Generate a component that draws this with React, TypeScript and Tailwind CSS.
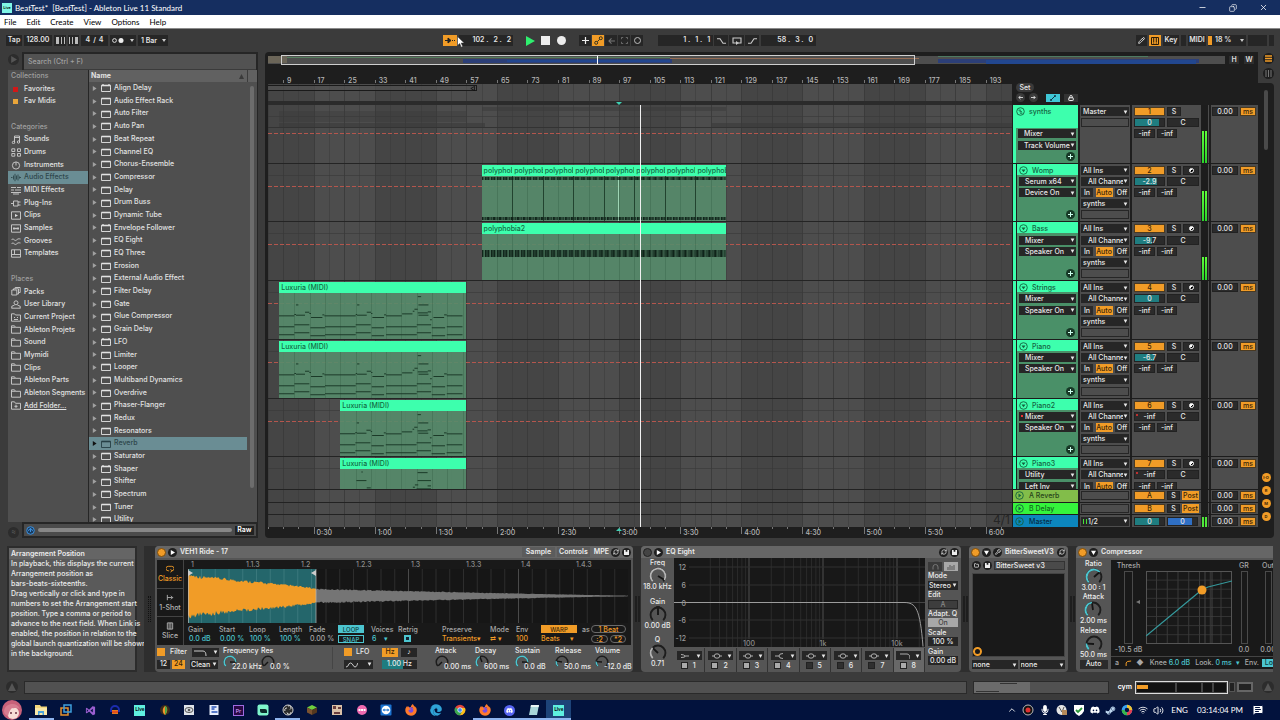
import React from "react";
import { FaDiscord, FaFirefoxBrowser, FaEdge, FaSteamSymbol, FaMicrophone } from "react-icons/fa";
import { DiVisualstudio } from "react-icons/di";
import {
  Wifi, Volume2, ChevronUp, Minus, Copy, X, Pencil, Lock, Wrench, RefreshCw, MessageSquareText, Folder,
} from "lucide-react";

const FIRST_BAR = 5.07;
const BAR_SPAN = 194.8;
const pct = (bar: number) => `${((bar - FIRST_BAR) / BAR_SPAN) * 100}%`;
const span = (bars: number) => `${(bars / BAR_SPAN) * 100}%`;
const range = (n: number) => Array.from({ length: n }, (_, i) => i);

/* ---------- shared controls ---------- */

function Drop({ label, value, className = "", text = "pl-[2px]" }: { label: string; value: string; className?: string; text?: string }) {
  return (
    <div className={`relative h-[9px] shrink-0 overflow-hidden bg-[#262626] ${className}`}>
      <select aria-label={label} className={`block h-full w-full appearance-none overflow-hidden bg-transparent leading-[9px] text-[#e8e8e8] outline-none ${text}`}>
        <option>{value}</option>
      </select>
      <span className="pointer-events-none absolute inset-y-0 right-0 flex w-[6px] items-center bg-[#262626]">
        <svg viewBox="0 0 5 5" className="h-[4px] w-[5px]"><path d="M.2.5h4.600L2.500 5z" fill="#e8e8e8" /></svg>
      </span>
    </div>
  );
}

function Btn({ children, className = "", label }: { children?: React.ReactNode; className?: string; label?: string }) {
  return (
    <button type="button" aria-label={label} className={`flex shrink-0 items-center justify-center overflow-hidden whitespace-nowrap ${className}`}>
      {children}
    </button>
  );
}

function Knob({ value, size = 14, color = "#4cc5cf", centre = false }: { value: number; size?: number; color?: string; centre?: boolean }) {
  const pt = (v: number, r: number) => {
    const a = ((135 + 270 * v) * Math.PI) / 180;
    return [8 + r * Math.cos(a), 8 + r * Math.sin(a)];
  };
  const arc = (from: number, to: number) => {
    const [x1, y1] = pt(from, 6.6);
    const [x2, y2] = pt(to, 6.6);
    return `M${x1} ${y1}A6.6 6.6 0 ${(to - from) * 270 > 180 ? 1 : 0} 1 ${x2} ${y2}`;
  };
  const [nx, ny] = pt(value, 6);
  return (
    <svg viewBox="0 0 16 16" width={size} height={size} fill="none" className="shrink-0">
      <path d={arc(0, 1)} stroke="#1d1d1d" strokeWidth="1.7" />
      {!centre && value > 0 && <path d={arc(0, value)} stroke={color} strokeWidth="1.7" />}
      {centre && <path d="M6 0h4L8 2.500z" fill="#1d1d1d" />}
      <path d={`M8 8L${nx} ${ny}`} stroke="#151515" strokeWidth="1.6" />
    </svg>
  );
}

function RoundIcon({ children, className = "bg-[#1f1f1f] text-[#ddd]", label }: { children?: React.ReactNode; className?: string; label: string }) {
  return (
    <button type="button" aria-label={label} className={`flex h-[9px] w-[9px] shrink-0 items-center justify-center rounded-full ${className}`}>
      {children}
    </button>
  );
}

const SaveGlyph = () => (
  <svg viewBox="0 0 6 6" className="h-[5px] w-[5px]"><path d="M0 0h6v6H0z" fill="#eee" /><path d="M2 0h2v2H2z" fill="#222" /></svg>
);
const PlayGlyph = () => (
  <svg viewBox="0 0 6 6" className="h-[5px] w-[5px]"><path d="M1 0l5 3-5 3z" fill="#fff" /></svg>
);
const DownGlyph = () => (
  <svg viewBox="0 0 6 6" className="h-[5px] w-[5px]"><path d="M0 1h6L3 6z" fill="#fff" /></svg>
);

/* ---------- window chrome ---------- */

function TitleBar() {
  return (
    <header className="flex h-[15px] items-center bg-[#152e60] px-[2px] text-[8px] text-white [font-family:Lato,sans-serif]">
      <span className="mr-[3px] flex h-[10px] w-[10px] items-center justify-center bg-[#7ff5e6] text-[4px] font-bold text-black">Live</span>
      <h1 className="flex-1 whitespace-pre">BeatTest*  [BeatTest] - Ableton Live 11 Standard</h1>
      <div className="flex gap-[22px] pr-[10px]">
        <button aria-label="Minimize"><Minus size={9} /></button>
        <button aria-label="Restore"><Copy size={8} className="-scale-x-100" /></button>
        <button aria-label="Close"><X size={9} /></button>
      </div>
    </header>
  );
}

function MenuBar() {
  return (
    <nav className="flex h-[13px] items-center gap-[10px] bg-white px-[4px] text-[8px] text-black [font-family:Lato,sans-serif]">
      {["File", "Edit", "Create", "View", "Options", "Help"].map((m) => (
        <button key={m}>{m}</button>
      ))}
    </nav>
  );
}

function Toolbar() {
  const box = "h-[11px] bg-[#262626]";
  return (
    <div className="flex h-[24px] items-center border-t border-[#8a8a8a] px-[6px] text-[7px] font-semibold text-[#e4e4e4]">
      <div className="flex shrink-0 gap-[2px]">
        <Btn className={`${box} w-[16px]`}>Tap</Btn>
        <Btn className={`${box} w-[28px]`}>128.00</Btn>
        <Btn className={`${box} w-[12px]`} label="Nudge down">
          <svg viewBox="0 0 9 7" className="h-[7px] w-[9px]"><path d="M0 0h3v7H0zM5 0h1v7H5zM8 0h1v7H8z" fill="#bbb" /></svg>
        </Btn>
        <Btn className={`${box} w-[11px]`} label="Nudge up">
          <svg viewBox="0 0 9 7" className="h-[7px] w-[9px]"><path d="M0 0h1v7H0zM3 0h1v7H3zM6 0h3v7H6z" fill="#bbb" /></svg>
        </Btn>
        <Btn className={`${box} w-[27px] gap-[3px]`}><span>4</span><span>/</span><span>4</span></Btn>
        <Btn className={`${box} w-[26px] gap-[6px]`} label="Metronome">
          <svg viewBox="0 0 12 5" className="h-[5px] w-[12px]"><circle cx="2.5" cy="2.5" r="1.9" fill="none" stroke="#ddd" /><circle cx="9" cy="2.5" r="2.5" fill="#eee" /></svg>
          <svg viewBox="0 0 4 3" className="h-[3px] w-[4px]"><path d="M0 0h4L2 3z" fill="#ccc" /></svg>
        </Btn>
        <div className={`${box} relative w-[30px]`}>
          <select aria-label="Quantization" className="h-full w-full appearance-none bg-transparent pl-[3px] leading-[11px] outline-none"><option>1 Bar</option></select>
          <svg viewBox="0 0 4 3" className="pointer-events-none absolute right-[2px] top-[4px] h-[3px] w-[4px]"><path d="M0 0h4L2 3z" fill="#ccc" /></svg>
        </div>
      </div>
      <div className="flex-[278]" />
      <div className="flex shrink-0 items-center">
        <Btn className="relative h-[11px] w-[14px] bg-[#f19c27]" label="Follow">
          <svg viewBox="0 0 12 7" className="h-[7px] w-[12px]"><path d="M1 3.5h4M4 1l3 2.5L4 6z" fill="#222" stroke="#222" /><path d="M8 3.5h1M10 3.5h1" stroke="#222" /></svg>
        </Btn>
        <div className={`${box} relative ml-[2px] flex w-[54px] items-center justify-end gap-[5px] pr-[2px]`}>
          <span>102 .</span><span>2 .</span><span>2</span>
          <svg viewBox="0 0 8 12" className="absolute left-[-2px] top-[1px] h-[12px] w-[8px]"><path d="M.5.5v9l2.2-2 1.5 3.7 1.5-.6L4.2 7h3z" fill="#fff" stroke="#333" strokeWidth=".5" /></svg>
        </div>
        <button aria-label="Play" className="ml-[12px]"><svg viewBox="0 0 10 10" className="h-[10px] w-[10px]"><path d="M1 0l9 5-9 5z" fill="#2ff06f" /></svg></button>
        <button aria-label="Stop" className="ml-[6px] h-[9px] w-[9px] bg-[#ededed]" />
        <button aria-label="Record" className="ml-[7px] h-[9px] w-[9px] rounded-full bg-[#ededed]" />
        <div className="ml-[13px] flex gap-[1px]">
          <Btn className={`${box} w-[12px]`} label="Overdub"><svg viewBox="0 0 7 7" className="h-[7px] w-[7px]"><path d="M3.5 0v7M0 3.5h7" stroke="#eee" strokeWidth="1.2" /></svg></Btn>
          <Btn className="h-[11px] w-[12px] bg-[#f19c27]" label="Automation arm"><svg viewBox="0 0 9 9" className="h-[9px] w-[9px]" fill="none" stroke="#332" strokeWidth="1"><circle cx="2.2" cy="6.8" r="1.5" /><circle cx="6.8" cy="2.2" r="1.5" /><path d="M3.3 5.7l2.4-2.4" /></svg></Btn>
          <Btn className={`${box} w-[12px]`} label="Re-enable automation"><svg viewBox="0 0 8 7" className="h-[6px] w-[7px]"><path d="M8 3.5H1M4 .5l-3 3 3 3" fill="none" stroke="#777" strokeWidth="1.2" /></svg></Btn>
          <Btn className={`${box} w-[12px]`} label="Capture"><svg viewBox="0 0 8 8" className="h-[7px] w-[7px]"><path d="M0.500 2.500V.5h2M5.500 .5h2v2M7.500 5.500v2h-2M2.500 7.500H.5V5.500" fill="none" stroke="#777" /></svg></Btn>
          <Btn className={`${box} w-[12px]`} label="Session record"><span className="h-[7px] w-[7px] rounded-full border border-[#bbb]" /></Btn>
        </div>
        <div className={`${box} ml-[15px] flex w-[55px] items-center justify-end gap-[5px] pr-[3px]`}><span>1 .</span><span>1 .</span><span>1</span></div>
        <div className="ml-[1px] flex gap-[1px]">
          <Btn className={`${box} w-[14px]`} label="Punch in"><svg viewBox="0 0 9 6" className="h-[6px] w-[9px]"><path d="M0 .7h3l3 4.600h3" fill="none" stroke="#ccc" strokeWidth="1.1" /></svg></Btn>
          <Btn className={`${box} w-[15px]`} label="Loop"><svg viewBox="0 0 10 8" className="h-[8px] w-[10px]"><path d="M4 6H1V1h8v5H6" fill="none" stroke="#ccc" strokeWidth="1.1" /><path d="M4 4l3 2-3 2z" fill="#ccc" /></svg></Btn>
          <Btn className={`${box} w-[14px]`} label="Punch out"><svg viewBox="0 0 9 6" className="h-[6px] w-[9px]"><path d="M0 5.300h3L6 .7h3" fill="none" stroke="#ccc" strokeWidth="1.1" /></svg></Btn>
        </div>
        <div className={`${box} ml-[2px] flex w-[55px] items-center justify-end gap-[5px] pr-[3px]`}><span>58 .</span><span>3 .</span><span>0</span></div>
      </div>
      <div className="flex-[323]" />
      <div className="flex shrink-0 gap-[2px]">
        <Btn className={`${box} w-[11px]`} label="Draw mode"><Pencil size={7} strokeWidth={3} /></Btn>
        <Btn className="h-[11px] w-[12px] bg-[#f19c27]" label="MIDI keyboard"><svg viewBox="0 0 8 8" className="h-[8px] w-[8px]"><path d="M.5.5h7v7h-7z" fill="none" stroke="#2a1c08" /><path d="M2.200 0v5h1V0zM4.800 0v5h1V0z" fill="#2a1c08" /><path d="M2.700 5v3M5.300 5v3" stroke="#2a1c08" strokeWidth=".6" /></svg></Btn>
        <Btn className={`${box} w-[16px]`}>Key</Btn>
        <span className={`${box} w-[5px]`} />
        <Btn className={`${box} w-[18px]`}>MIDI</Btn>
        <div className={`${box} flex w-[38px] items-center`}>
          <span className="mr-[3px] h-[9px] w-[4px] bg-[#f19c27]" /><span className="flex-1">18 %</span>
          <svg viewBox="0 0 4 3" className="mr-[2px] h-[3px] w-[4px]"><path d="M0 0h4L2 3z" fill="#ccc" /></svg>
        </div>
        <span className={`${box} w-[19px]`} />
        <span className={`${box} w-[5px]`} />
      </div>
    </div>
  );
}

/* ---------- browser ---------- */

type IconName = "sq" | "music" | "drums" | "knob" | "fx" | "midi" | "plug" | "clip" | "sample" | "groove" | "template" | "packs" | "user" | "project" | "folder" | "add";

function SideIcon({ name }: { name: IconName }) {
  const d: Record<string, React.ReactNode> = {
    music: <><path d="M3.500 7.500V1h5v6M3.500 2.500h5" /><circle cx="2.500" cy="7.500" r="1.200" /><circle cx="7.500" cy="7" r="1.200" /></>,
    drums: <path d="M.8.8h3v2.700h-3zM6.500.8h3v2.700h-3zM.8 5.500h3v2.700h-3zM6.500 5.500h3v2.700h-3z" />,
    knob: <><circle cx="5" cy="4.500" r="3.600" /><path d="M5 1v3.500" /></>,
    fx: <path d="M0 4.500h1.500M2.500 2.500v4M4 .8v7.400M5.500 2.500v4M7 1.500v6M8.500 3.500v2M9 4.500h1.500" stroke="#2e464b" />,
    midi: <path d="M0 1.500h5M6 1.500h4M0 4h3M4 4h6M0 6.500h10M2 8h6" />,
    plug: <path d="M0 4.500h2M2.500 2h4.500v5H2.500zM7 3h2.500M7 6h2.500" />,
    clip: <><path d="M.5.8h9v7.400h-9z" /><path d="M4 3l3 1.500L4 6z" fill="#ddd" stroke="none" /></>,
    sample: <path d="M.5.8h9v7.400h-9zM2 4.500h6M3 3v3M5 3.500v2M7 3v3" />,
    groove: <path d="M.5 3c2-3 3 2 5 0s3-1 4-1M.5 7c2-3 3 2 5 0s3-1 4-1" />,
    template: <path d="M.5.8h9v7.400h-9zM3.500.8v4.500M.5 5.500h9" />,
    packs: <path d="M.8 3h5v5h-5zM2.500 3V1.800h5V7H6M4.200 1.500V.5h5v5H8" />,
    user: <><circle cx="5" cy="2.800" r="2" /><path d="M.8 8.200v-2l2.700-1M9.200 8.200v-2l-2.700-1M.5 8.200h9" /></>,
    project: <path d="M.5 8.200V.8h3l1 1.200h5v6.200zM3 4.500h1M6 4.500h1M3 6.500h4" />,
    folder: <path d="M.5 8.200V.8h3l1 1.500h5v5.900zM.5 2.300h4" />,
    add: <path d="M.5 8.200V.8h3l1 1.500h5v5.900zM5 3.700v3.200M3.400 5.300h3.200" />,
  };
  return <svg viewBox="0 0 10 9" className="h-[9px] w-[10px] shrink-0" fill="none" stroke="#cfcfcf" strokeWidth=".9">{d[name]}</svg>;
}

type SideRow = { head?: string; text?: string; icon?: IconName; color?: string };
const SIDE: SideRow[] = [
  { head: "Collections" },
  { text: "Favorites", icon: "sq", color: "#d01818" },
  { text: "Fav Midis", icon: "sq", color: "#e9a53a" },
  {},
  { head: "Categories" },
  { text: "Sounds", icon: "music" },
  { text: "Drums", icon: "drums" },
  { text: "Instruments", icon: "knob" },
  { text: "Audio Effects", icon: "fx" },
  { text: "MIDI Effects", icon: "midi" },
  { text: "Plug-Ins", icon: "plug" },
  { text: "Clips", icon: "clip" },
  { text: "Samples", icon: "sample" },
  { text: "Grooves", icon: "groove" },
  { text: "Templates", icon: "template" },
  {},
  { head: "Places" },
  { text: "Packs", icon: "packs" },
  { text: "User Library", icon: "user" },
  { text: "Current Project", icon: "project" },
  { text: "Ableton Projets", icon: "folder" },
  { text: "Sound", icon: "folder" },
  { text: "Mymidi", icon: "folder" },
  { text: "Clips", icon: "folder" },
  { text: "Ableton Parts", icon: "folder" },
  { text: "Ableton Segments", icon: "folder" },
  { text: "Add Folder...", icon: "add" },
];

const EFFECTS = [
  "Align Delay", "Audio Effect Rack", "Auto Filter", "Auto Pan", "Beat Repeat", "Channel EQ", "Chorus-Ensemble", "Compressor",
  "Delay", "Drum Buss", "Dynamic Tube", "Envelope Follower", "EQ Eight", "EQ Three", "Erosion", "External Audio Effect",
  "Filter Delay", "Gate", "Glue Compressor", "Grain Delay", "LFO", "Limiter", "Looper", "Multiband Dynamics", "Overdrive",
  "Phaser-Flanger", "Redux", "Resonators", "Reverb", "Saturator", "Shaper", "Shifter", "Spectrum", "Tuner", "Utility",
];
const MAX_DEVICES = ["Align Delay", "Envelope Follower", "LFO", "Shaper"];

function Browser() {
  return (
    <aside className="flex w-[250px] shrink-0 flex-col text-[7px] font-medium text-[#e2e2e2]">
      <div className="flex h-[18px] items-center">
        <Btn label="Preview" className="mb-[3px] h-[11px] w-[11px] rounded-full bg-[#2c2c2c]"><svg viewBox="0 0 6 6" className="h-[7px] w-[7px]"><path d="M1 0l5 3-5 3z" fill="#555" /></svg></Btn>
        <div className="ml-[3px] flex-1 self-stretch border-2 border-b-0 border-[#262626]">
          <input aria-label="Search" placeholder="Search (Ctrl + F)" className="block h-[15px] w-full bg-[#525252] pl-[4px] text-[7px] outline-none placeholder:text-[#a0a0a0]" />
        </div>
      </div>
      <div className="flex h-[452px] border-r border-[#262626] bg-[#4f4f4f]">
        <nav className="w-[80px] shrink-0 overflow-hidden">
          <div className="flex h-[342px] flex-col">
            {SIDE.map((r, i) => (
              <div key={i} className={`flex flex-1 items-center pl-[3px] ${r.text === "Audio Effects" ? "bg-[#6a8d94] text-[#2e464b]" : ""}`}>
                {r.head && <h2 className="text-[#9f9f9f]">{r.head}</h2>}
                {r.text && (
                  <a href="#" className="flex items-center gap-[3px] whitespace-nowrap">
                    {r.icon === "sq" ? (
                      <span className="ml-[2px] mr-[3px] h-[5px] w-[5px]" style={{ background: r.color }} />
                    ) : (
                      <SideIcon name={r.icon!} />
                    )}
                    <span className={r.icon === "add" ? "underline" : ""}>{r.text}</span>
                  </a>
                )}
              </div>
            ))}
          </div>
        </nav>
        <div className="relative flex min-w-0 flex-1 flex-col border-l border-[#262626]">
          <div className="flex h-[12px] shrink-0 items-center bg-[#616161] pl-[2px] font-bold">
            <span className="flex-1">Name</span>
            <svg viewBox="0 0 5 5" className="h-[5px] w-[5px]"><path d="M0 5h5L2.500 0z" fill="#3a3a3a" /></svg>
            <span className="ml-[3px] mr-[9px] h-full w-px bg-[#3c3c3c]" />
          </div>
          <div className="flex min-h-0 flex-1 overflow-hidden">
            <ul className="flex h-[444px] flex-1 flex-col">
              {EFFECTS.map((e) => {
                const on = e === "Reverb";
                const c = on ? "#263f45" : "#e2e2e2";
                return (
                  <li key={e} className={`flex flex-1 items-center pl-[3px] ${on ? "bg-[#6a8d94] text-[#2e464b]" : ""}`}>
                    <svg viewBox="0 0 5 6" className="mr-[4px] h-[5px] w-[5px]"><path d="M.5 0L5 3 .5 6z" fill={on ? "#111" : "#a0a0a0"} /></svg>
                    <svg viewBox="0 0 10 8" className="mr-[3px] h-[8px] w-[10px]" fill="none" stroke={c}>
                      <path d="M.5 1.500h9v6h-9z" strokeWidth=".9" /><path d="M.5 1.500h9" strokeWidth="1.600" />
                      {MAX_DEVICES.includes(e) && <path d="M2 0v1M8 0v1M2 7v1M8 7v1M0 4.500h1M9 4.500h1" strokeWidth="1.200" />}
                    </svg>
                    <span>{e}</span>
                  </li>
                );
              })}
            </ul>
            <div className="w-[10px] pl-[3px] pt-[4px]"><div className="h-[402px] w-[4px] rounded-full bg-[#6d6d6d]" /></div>
          </div>
        </div>
      </div>
      <div className="flex h-[16px] items-center">
        <Btn label="Groove pool" className="mt-[5px] h-[11px] w-[11px] rounded-full bg-[#2c2c2c] text-[#555]">≈</Btn>
        <div className="ml-[3px] flex flex-1 items-center gap-[3px] self-stretch border-2 border-[#262626] bg-[#4b4b4b] px-[2px]">
          <svg viewBox="0 0 9 9" className="h-[9px] w-[9px] shrink-0"><circle cx="4.500" cy="4.500" r="3.800" fill="#1a3b5e" stroke="#3b8fdc" /><path d="M2.500 5a2 2 0 014 0M4.500 2v4" stroke="#3b8fdc" fill="none" /></svg>
          <div className="h-[4px] flex-1 rounded-sm bg-[#878787]" />
          <Btn className="h-[9px] w-[19px] bg-[#222] font-semibold text-white">Raw</Btn>
        </div>
      </div>
    </aside>
  );
}

/* ---------- arrangement ---------- */

type Note = [number, number, number];
const NOTES: Note[] = [
  [42, 88, 136], [88, 93, 132], [93, 120, 134], [120, 133, 125], [133, 138, 129], [138, 172, 141], [172, 178, 133], [178, 272, 136],
  [272, 276, 132], [276, 305, 134], [305, 318, 125], [318, 322, 129], [322, 357, 141], [357, 363, 133], [363, 410, 136],
  [411, 442, 130], [443, 448, 122], [448, 458, 116], [458, 488, 127], [460, 490, 134], [488, 498, 124], [495, 500, 148], [505, 537, 141],
  [537, 545, 133], [545, 592, 136], [42, 88, 169], [88, 133, 163], [136, 180, 172], [180, 272, 169], [272, 317, 163], [320, 357, 172],
  [363, 455, 169], [455, 498, 163], [500, 540, 172], [545, 592, 169], [42, 88, 193], [88, 133, 187], [136, 180, 196], [180, 272, 193],
  [272, 317, 187], [320, 357, 196], [363, 455, 193], [455, 498, 187], [500, 540, 196], [545, 592, 193], [458, 468, 78], [460, 490, 103],
  [93, 100, 103], [276, 283, 103],
];
const SHORT_NOTES: Note[] = [
  [275, 305, 102], [290, 294, 76], [306, 318, 124], [458, 488, 78], [458, 498, 102], [444, 450, 122], [450, 460, 115], [455, 498, 127], [488, 498, 118],
];

function NoteLines({ from, notes, height = 138 }: { from: number; notes: Note[]; height?: number }) {
  return (
    <svg viewBox={`${from} 67 ${603 - from} ${height}`} preserveAspectRatio="none" className="absolute inset-0 h-full w-full">
      {notes.filter((n) => n[1] > from).map(([a, b, y], i) => (
        <path key={i} d={`M${a} ${y}H${b}`} stroke="#1b3a28" strokeWidth="3" />
      ))}
    </svg>
  );
}

function Ticks({ h, seed, className }: { h: number; seed: number; className: string }) {
  return (
    <svg viewBox={`0 0 488 ${h}`} preserveAspectRatio="none" className={`absolute inset-x-0 w-full ${className}`}>
      {range(163).map((i) => (
        <rect key={i} x={i * 3} y="0" width={1.500 + ((i * 7 + seed) % 4) * 0.450} height={h} fill="#10241a" />
      ))}
    </svg>
  );
}

type Clip = { from: number; to: number; name: string; kind: "notes" | "notesLate" | "short" | "poly" | "bass" };
type Track = {
  name: string; device: string; param: string; vol: string; fill: number; line?: string; clip?: Clip; meter?: string; arm?: boolean; group?: boolean;
};
const TRACKS: Track[] = [
  { name: "synths", device: "Mixer", param: "Track Volume", vol: "0", fill: 84, line: "top-[28px]", meter: "h-[32px]", group: true },
  { name: "Womp", device: "Serum x64", param: "Device On", vol: "-2.9", fill: 76, line: "top-[22px]", meter: "h-[30px]", clip: { from: 61, to: 125, name: "polyphobia", kind: "poly" } },
  { name: "Bass", device: "Mixer", param: "Speaker On", vol: "-9.7", fill: 60, line: "top-[22px]", meter: "h-[23px]", clip: { from: 61, to: 125, name: "polyphobia2", kind: "bass" } },
  { name: "Strings", device: "Mixer", param: "Speaker On", vol: "0", fill: 84, line: "top-[22px]", clip: { from: 8, to: 57, name: "Luxuria (MIDI)", kind: "notes" } },
  { name: "Piano", device: "Mixer", param: "Speaker On", vol: "-6.7", fill: 66, line: "top-[22px]", clip: { from: 8, to: 57, name: "Luxuria (MIDI)", kind: "notes" } },
  { name: "Piano2", device: "Mixer", param: "Speaker On", vol: "-inf", fill: 0, arm: true, line: "top-[22px]", clip: { from: 24, to: 57, name: "Luxuria (MIDI)", kind: "notesLate" } },
  { name: "Piano3", device: "Utility", param: "Left Inv", vol: "-inf", fill: 0, arm: true, clip: { from: 24, to: 57, name: "Luxuria (MIDI)", kind: "short" } },
];

function ClipView({ clip }: { clip: Clip }) {
  return (
    <div className="absolute bottom-0 top-px flex flex-col overflow-hidden text-[7px] font-medium leading-[11px]" style={{ left: pct(clip.from), width: span(clip.to - clip.from) }}>
      <div className="flex h-[11px] shrink-0 items-center bg-[#3dffad] text-[#126b43]">
        {clip.kind === "poly"
          ? range(8).map((i) => <span key={i} className="min-w-0 flex-1 overflow-hidden whitespace-nowrap pl-[2px]">polyphobia</span>)
          : <span className="pl-[2px]">{clip.name}</span>}
      </div>
      <div className="relative flex-1 bg-[#568c6c]/90">
        {range(Math.floor((clip.to - clip.from) / 4)).map((i) => (
          <span key={i} className="absolute inset-y-0 w-px bg-[#2d5a3f]/30" style={{ left: `${((i + 1) * 400) / (clip.to - clip.from)}%` }} />
        ))}
        {clip.kind === "poly" && (
          <>
            {range(7).map((i) => <span key={i} className="absolute inset-y-0 w-px bg-[#22432f]" style={{ left: `${(i + 1) * 12.5}%` }} />)}
            <span className="absolute inset-y-0 left-[56%] w-px bg-[#9fd5b5]" />
            <Ticks h={3} seed={1} className="top-[1px] h-[3px]" />
            <Ticks h={3} seed={2} className="bottom-[1px] h-[3px]" />
          </>
        )}
        {clip.kind === "bass" && <Ticks h={7} seed={5} className="top-[16px] h-[7px]" />}
        {clip.kind === "notes" && <NoteLines from={42} notes={NOTES} />}
        {clip.kind === "notesLate" && <NoteLines from={226} notes={NOTES} />}
        {clip.kind === "short" && <NoteLines from={226} notes={SHORT_NOTES} />}
      </div>
    </div>
  );
}

function Grid() {
  return (
    <div className="absolute inset-0 overflow-hidden bg-[#454545]">
      {range(6).map((i) => (
        <span key={i} className="absolute inset-y-0 bg-[#4d4d4d]" style={{ left: pct(17 + i * 32), width: span(16) }} />
      ))}
      {range(49).map((i) => (
        <span key={i} className={`absolute inset-y-0 w-px ${i % 2 ? "bg-[#383838]/80" : "bg-[#383838]/45"}`} style={{ left: pct(5 + i * 4) }} />
      ))}
    </div>
  );
}

function Lanes() {
  return (
    <div className="relative flex min-w-0 flex-1 flex-col">
      <div className="relative h-[21px]">
        {range(24).map((i) => (
          <span key={i} className="absolute bottom-0 flex items-end text-[7px] font-medium leading-[7px] text-[#b5b5b5]" style={{ left: pct(9 + i * 8) }}>
            <span className="mb-[1px] mr-[3px] h-[3px] w-px bg-[#777]" />{9 + i * 8}
          </span>
        ))}
      </div>
      <div className="relative h-[17px]">
        <Grid />
        <div className="absolute left-0 top-[1px] h-[6px] border-y border-r border-[#1a1a1a] bg-[#555]/60" style={{ width: span(54.600) }} />
        <svg viewBox="0 0 6 6" className="absolute top-[2px] h-[5px] w-[5px]" style={{ left: pct(58) }}><path d="M5.500.5v5L1 3z" fill="none" stroke="#111" /></svg>
      </div>
      <div className="h-[4px] bg-[#2b2b2b]" />
      <div className="relative">
        <Grid />
        <div className="relative h-[384px] overflow-hidden">
          <div className="flex h-[411px] flex-col">
            {TRACKS.map((t) => (
              <div key={t.name} className="relative flex-1 border-b border-[#242424]">
                <span className="absolute inset-x-0 top-[11px] h-px bg-[#383838]/60" />
                {t.group && (
                  <>
                    <span className="absolute inset-x-0 top-[22px] h-px bg-[#333]" />
                    <span className="absolute top-[6px] h-[11px] bg-[#3a3a3a]/40" style={{ left: pct(8), width: span(49) }} />
                    <span className="absolute top-[18px] h-[4px] bg-[#3a3a3a]/60" style={{ left: pct(8), width: span(54) }} />
                    <span className="absolute top-[2px] h-[4px] bg-[#3a3a3a]/50" style={{ left: pct(61), width: span(64) }} />
                    <span className="absolute top-[18px] h-[4px] bg-[#3a3a3a]/60" style={{ left: pct(121), right: 0 }} />
                  </>
                )}
                {t.line && <span className={`absolute inset-x-0 h-px bg-[repeating-linear-gradient(90deg,#b4564d_0_4px,transparent_4px_6px)] ${t.line}`} />}
                {t.clip && <ClipView clip={t.clip} />}
              </div>
            ))}
          </div>
        </div>
        <div className="relative flex h-[38px] flex-col">
          {range(3).map((i) => <div key={i} className="flex-1 border-t border-[#222]" />)}
          <span className="absolute bottom-0 right-[2px] text-[12px] leading-[14px] text-[#262626]">4/1</span>
        </div>
        <svg viewBox="0 0 6 3" className="absolute -top-[3px] h-[3px] w-[6px] -translate-x-1/2" style={{ left: pct(97) }}><path d="M0 0h6L3 3z" fill="#3ed1b4" /></svg>
        <span className="absolute inset-y-0 w-px bg-[#f0f0f0]" style={{ left: pct(102.400) }} />
      </div>
      <div className="relative h-[11px] overflow-hidden">
        {range(49).map((i) => (
          <span key={i} className="absolute top-0 h-[2px] w-px bg-[#777]" style={{ left: pct(5 + i * 4) }} />
        ))}
        {range(12).map((i) => (
          <span key={i} className="absolute top-0 flex text-[7px] font-medium leading-[11px] text-[#b5b5b5]" style={{ left: pct(17 + i * 16) }}>
            <span className="mr-[2px] h-[7px] w-px bg-[#777]" />{`${Math.floor((i + 1) / 2)}:${i % 2 ? "00" : "30"}`}
          </span>
        ))}
        <svg viewBox="0 0 6 3" className="absolute top-[1px] h-[3px] w-[6px] -translate-x-1/2" style={{ left: pct(97) }}><path d="M0 3h6L3 0z" fill="#3ed1b4" /></svg>
      </div>
    </div>
  );
}

const Fold = ({ kind }: { kind: "group" | "open" | "closed" }) => (
  <svg viewBox="0 0 9 9" className="h-[9px] w-[9px] shrink-0" fill="none" stroke="#14633f" strokeWidth=".9">
    <circle cx="4.500" cy="4.500" r="3.800" />
    {kind === "group" && <path d="M2.500 3.200h2.500M3.500 4.700h2.500M4 6.200h2.500" />}
    {kind === "open" && <path d="M2.500 3.500h4L4.500 6.300z" fill="#14633f" stroke="none" />}
    {kind === "closed" && <path d="M3.500 2.500v4L6.300 4.500z" fill="#14633f" stroke="none" />}
  </svg>
);

const Plus = () => (
  <RoundIcon label="Add automation lane" className="h-[7px] w-[7px] bg-[#173826]"><svg viewBox="0 0 5 5" className="h-[5px] w-[5px]"><path d="M2.500 0v5M0 2.500h5" stroke="#cfe" /></svg></RoundIcon>
);

const cell = "h-[9px] bg-[#2b2b2b] border border-[#222]";
const orange = "h-[9px] bg-[#f19c27] text-[#3a2507] border border-[#4a3a22]";
const slot = "h-[9px] shrink-0 border border-[#262626]";

function VolumeCell({ value, fill, arm, color = "#1f7d80" }: { value: string; fill: number; arm?: boolean; color?: string }) {
  return (
    <div className={`relative w-[31px] overflow-hidden ${cell}`}>
      <span className="absolute inset-y-0 left-0" style={{ width: `${fill}%`, background: color }} />
      {arm && <span className="absolute left-[1px] top-[1px] h-[2px] w-[2px] rounded-full bg-[#e33]" />}
      <span className="absolute inset-0 text-center leading-[7px]">{value}</span>
    </div>
  );
}

const col = "flex shrink-0 flex-col justify-between py-[2px]";

function TrackHead({ t, index }: { t: Track; index: number }) {
  return (
    <div className="flex flex-1 gap-[2px] border-b border-[#1c1c1c]">
      <div className="flex w-[65px] shrink-0">
        <span className="w-[3px] shrink-0 bg-[#3dffad]" />
        <div className={`relative flex min-w-0 flex-1 flex-col justify-between bg-[#4a9068] py-[2px] text-[#e8e8e8] ${t.group ? "" : "border-l border-[#1e1e1e]"}`}>
          <span className={`absolute inset-x-0 top-0 bg-[#3dffad] ${t.group ? "h-[23px]" : "h-[11px]"}`} />
          <h3 className={`relative flex h-[9px] items-center gap-[4px] text-[#14633f] ${t.group ? "" : "pl-[2px]"}`}><Fold kind={t.group ? "group" : "open"} />{t.name}</h3>
          {t.group && <span className="h-[9px]" />}
          <div className="relative mx-[2px]"><Drop label={`${t.name} device`} value={t.device} text="pl-[6px]" />{t.name === "Piano2" && <span className="absolute left-[2px] top-[3px] h-[2px] w-[2px] bg-[#e33]" />}</div>
          <div className="mx-[2px]"><Drop label={`${t.name} parameter`} value={t.param} text="pl-[6px]" /></div>
          {!t.group && <span className="h-[9px]" />}
          <div className="flex h-[9px] items-center justify-end pr-[3px]"><Plus /></div>
        </div>
      </div>
      <div className={`${col} w-[50px] bg-[#4d4d4d] px-px`}>
        <Drop label={`${t.name} input`} value={t.group ? "Master" : "All Ins"} text="pl-[2px]" />
        {t.group ? (
          <><span className={slot} /><span className="h-[9px]" /><span className="h-[9px]" /><span className="h-[9px]" /></>
        ) : (
          <>
            <Drop label={`${t.name} channel`} value="All Channels" text="pl-[7px]" />
            <div className="flex justify-between">
              <Btn className="h-[9px] w-[12px] bg-[#2b2b2b]">In</Btn><Btn className="h-[9px] w-[17px] bg-[#f19c27] text-[#3a2507]">Auto</Btn><Btn className="h-[9px] w-[14px] bg-[#2b2b2b]">Off</Btn>
            </div>
            <Drop label={`${t.name} output`} value="synths" text="pl-[2px]" />
            <span className={slot} />
          </>
        )}
      </div>
      <div className="flex w-[77px] shrink-0 justify-between bg-[#4d4d4d]">
        <div className={`${col} w-[67px] pl-[2px]`}>
          <div className="flex gap-[2px]">
            <Btn className={`w-[31px] ${orange}`}>{index + 1}</Btn>
            <Btn className={`w-[14px] ${cell}`}>S</Btn>
            {!t.group && <Btn label="Arm" className={`w-[16px] ${cell}`}><span className="h-[5px] w-[5px] rounded-full border border-white bg-gradient-to-br from-white from-50% to-black to-50%" /></Btn>}
          </div>
          <div className="flex gap-[2px]"><VolumeCell value={t.vol} fill={t.fill} arm={t.arm} /><Btn className={`w-[32px] ${cell}`}>C</Btn></div>
          <div className="flex gap-[2px]"><Btn className={`w-[21px] ${cell}`}>-inf</Btn><Btn className={`w-[20px] ${cell}`}>-inf</Btn></div>
          <span className="h-[9px]" /><span className="h-[9px]" />
        </div>
        <div className="mr-px flex w-[7px] items-end gap-px bg-[#1d1d1d] px-px">
          {t.meter && range(2).map((i) => <span key={i} className={`flex-1 bg-gradient-to-t from-[#2bd32b] to-[#5dff3a] ${t.meter}`} />)}
        </div>
      </div>
      <div className="flex w-[47px] shrink-0 justify-between bg-[#4d4d4d] p-[2px] pl-px">
        <Btn className={`w-[26px] ${cell}`}>0.00</Btn><Btn className={`w-[16px] ${orange}`}>ms</Btn>
      </div>
    </div>
  );
}

function ReturnHead({ name, color, text, letter }: { name: string; color: string; text: string; letter?: string }) {
  return (
    <div className="flex flex-1 items-stretch gap-[2px] border-t border-[#1c1c1c]">
      <h3 className={`flex w-[65px] items-center gap-[5px] pl-[2px] ${color} ${text}`}><Fold kind="closed" />{name}</h3>
      <div className="flex w-[50px] items-center bg-[#4d4d4d] px-px">
        {letter ? <span className={`${slot} w-full`} /> : (
          <div className="relative w-full">
            <Drop label="Master output" value="1/2" text="pl-[7px]" />
            <span className="absolute left-[2px] top-[2px] h-[5px] w-[4px] border-x border-[#47e03a]" />
          </div>
        )}
      </div>
      <div className="flex w-[77px] items-center justify-between bg-[#4d4d4d] pl-[2px]">
        <div className="flex gap-[2px]">
          {letter ? (
            <><Btn className={`w-[31px] ${orange}`}>{letter}</Btn><Btn className={`w-[13px] ${cell}`}>S</Btn><Btn className="h-[9px] w-[17px] bg-[#f19c27] text-[#3a2507]">Post</Btn></>
          ) : (
            <><VolumeCell value="0" fill={84} /><VolumeCell value="0" fill={82} color="#2f6fc4" /></>
          )}
        </div>
        <div className="mr-px flex w-[7px] items-end gap-px self-stretch bg-[#1d1d1d] px-px">
          {!letter && range(2).map((i) => <span key={i} className="h-[10px] flex-1 bg-[#4fe83a]" />)}
        </div>
      </div>
      <div className="flex w-[47px] items-center justify-between bg-[#4d4d4d] pl-px pr-[2px]">
        <Btn className={`w-[26px] ${cell}`}>0.00</Btn><Btn className={`w-[16px] ${orange}`}>ms</Btn>
      </div>
    </div>
  );
}

function TrackPanel() {
  return (
    <div className="ml-px w-[245px] shrink-0 text-[7px] font-medium leading-[9px] text-[#e8e8e8]">
      <div className="flex h-[42px] flex-col gap-[1px] pl-[3px] pt-[20px]">
        <Btn className="h-[9px] w-[18px] rounded-full bg-[#3a3a3a]">Set</Btn>
        <div className="flex items-center">
          <RoundIcon label="Previous locator" className="h-[7px] w-[7px] bg-[#3a3a3a]"><svg viewBox="0 0 6 6" className="h-[5px] w-[5px]"><path d="M6 3H1M3 1L1 3l2 2" stroke="#eee" fill="none" /></svg></RoundIcon>
          <RoundIcon label="Next locator" className="ml-[4px] h-[7px] w-[7px] bg-[#3a3a3a]"><svg viewBox="0 0 6 6" className="h-[5px] w-[5px]"><path d="M0 3h5M3 1l2 2-2 2" stroke="#eee" fill="none" /></svg></RoundIcon>
          <Btn label="Automation mode" className="ml-[8px] h-[8px] w-[14px] bg-[#3fc7d6]"><svg viewBox="0 0 6 6" className="h-[6px] w-[6px]"><path d="M1 5l4-4" stroke="#134" /><circle cx="1" cy="5" r="1" fill="#134" /><circle cx="5" cy="1" r="1" fill="#134" /></svg></Btn>
          <Btn label="Lock envelopes" className="ml-[4px] h-[8px] w-[14px] bg-[#333]"><Lock size={6} strokeWidth={4} /></Btn>
        </div>
      </div>
      <div className="h-[384px] overflow-hidden">
        <div className="flex h-[411px] flex-col">{TRACKS.map((t, i) => <TrackHead key={t.name} t={t} index={i} />)}</div>
      </div>
      <div className="flex h-[38px] flex-col">
        <ReturnHead name="A Reverb" letter="A" color="bg-[#82bd4a]" text="text-[#28441a]" />
        <ReturnHead name="B Delay" letter="B" color="bg-[#35f43c]" text="text-[#126b1c]" />
        <ReturnHead name="Master" color="bg-[#0c86bd]" text="text-[#062c42]" />
      </div>
    </div>
  );
}

function Overview() {
  return (
    <div className="flex h-[11px] items-center pl-[3px] pt-px">
      <div className="relative h-[8px] flex-1 bg-[#4e4e4e]">
        <span className="absolute left-0 top-0 h-[7px] w-[2%] bg-[#6b6558]" />
        <span className="absolute left-[2%] top-[1px] h-px w-[40%] bg-[#56805f]" />
        <span className="absolute left-[20.400%] top-[3px] h-[4px] w-[21.800%] bg-[#2c3f78]" />
        <span className="absolute left-[25%] top-[4px] h-[2px] w-[17%] bg-[#22478f]" />
        <span className="absolute left-[42%] top-[2px] h-[1px] w-[26%] bg-[#946c54]" />
        <span className="absolute left-[70%] top-0 h-px w-[22%] bg-[#4e7a62]" />
        <span className="absolute left-[70%] top-[3px] h-[4px] w-[27.300%] bg-[#2c3f78]" />
        <span className="absolute left-[75%] top-[4px] h-[4px] w-[22%] bg-[#22478f]" />
        <span className="absolute left-[34.400%] top-0 h-[8px] w-px bg-white" />
        <span className="absolute -top-px left-[1.400%] h-[10px] w-[66.200%] border border-[#cfcfcf]" />
      </div>
      <div className="flex w-[33px] shrink-0 gap-[5px] pl-[4px] text-[7px] font-semibold leading-[8px] text-[#ddd]">
        <Btn className="h-[8px] w-[10px] bg-[#2e2e2e]">H</Btn><Btn className="h-[8px] w-[10px] bg-[#2e2e2e]">W</Btn>
      </div>
    </div>
  );
}

function Arrangement() {
  return (
    <section className="ml-[7px] flex min-w-0 flex-1">
      <div className="min-w-0 flex-1 rounded-l-sm bg-[#1e1e1e] pt-[2px]">
        <Overview />
        <div className="-mt-[2px] flex pl-[3px]">
          <Lanes />
          <TrackPanel />
        </div>
      </div>
      <div className="flex w-[16px] shrink-0 flex-col items-center">
        <div className="flex h-[31px] w-full flex-col items-center gap-[4px] pl-[5px] pt-[1px]">
          <Btn label="Arrangement view" className="h-[11px] w-[11px] rounded-full bg-[#1e1e1e]"><svg viewBox="0 0 7 7" className="h-[7px] w-[7px]"><path d="M0 1h7M0 3.500h7M0 6h7" stroke="#f19c27" strokeWidth="1.300" /></svg></Btn>
          <Btn label="Session view" className="h-[11px] w-[11px] rounded-full bg-[#1e1e1e]"><svg viewBox="0 0 7 7" className="h-[7px] w-[7px]"><path d="M1 0v7M3.500 0v7M6 0v7" stroke="#777" /></svg></Btn>
        </div>
        <div className="flex w-full flex-1 flex-col items-center justify-between rounded-r-sm bg-[#1e1e1e] pb-[17px] pt-[7px]">
          <div className="h-[60px] w-[4px] rounded-full bg-[#4a4a4a]" />
          <div className="flex flex-col gap-[4px]">
            {["I·O", "R", "M", "D"].map((s) => (
              <RoundIcon key={s} label={`Show ${s}`} className="bg-[#f19c27] text-[4px] font-bold text-[#3a2507]">{s}</RoundIcon>
            ))}
          </div>
        </div>
      </div>
    </section>
  );
}

/* ---------- devices ---------- */

function Device({ title, left, right, width, children }: { title: string; left: React.ReactNode; right?: React.ReactNode; width: string; children: React.ReactNode }) {
  return (
    <section className={`flex h-[126px] shrink-0 flex-col overflow-hidden rounded-sm bg-[#555] ${width}`}>
      <header className="flex h-[12px] shrink-0 items-center gap-[2px] bg-[#666] px-[2px] font-semibold">
        {left}
        <h2 className="ml-px flex-1 whitespace-nowrap">{title}</h2>
        {right}
      </header>
      {children}
    </section>
  );
}

const On = () => <RoundIcon label="Device on" className="border border-[#7a4c0c] bg-[#f19c27]" />;
const Hot = () => <RoundIcon label="Hot-swap"><RefreshCw size={6} strokeWidth={3} /></RoundIcon>;
const Save = () => <RoundIcon label="Save preset"><SaveGlyph /></RoundIcon>;

function wave(from: number, to: number, amp: (t: number) => number) {
  const up: string[] = [];
  const down: string[] = [];
  for (let x = from; x <= to; x++) {
    const t = (x - from) / (to - from);
    const j = Math.abs(Math.sin(x * 12.9898) * 43758.5453) % 1;
    const k = Math.abs(Math.sin(x * 78.233) * 12543.123) % 1;
    up.push(`${x} ${27 - amp(t) * (0.82 + 0.18 * j)}`);
    down.unshift(`${x} ${27 + amp(t) * (0.76 + 0.24 * k)}`);
  }
  return `M${up.join("L")}L${down.join("L")}Z`;
}
const HEAD_WAVE = wave(0, 128, (t) => 8 + 14 * Math.pow(1 - t, 0.9) + 3 * Math.exp(-t * 40));
const TAIL_WAVE = wave(128, 440, (t) => 0.4 + 7.2 * Math.pow(1 - t, 1.1));

function Param({ label, value, w, on = true }: { label: string; value: string; w: string; on?: boolean }) {
  return (
    <div className={`shrink-0 whitespace-nowrap ${w}`}>
      <div className="text-[#a8a8a8]">{label}</div>
      <div className={`pl-px ${on ? "text-[#4cc5cf]" : "text-[#a8a8a8]"}`}>{value}</div>
    </div>
  );
}

function SideKnob({ label, value, k }: { label: string; value: string; k: number }) {
  return (
    <div className="w-[40px] shrink-0 whitespace-nowrap">
      <div className="leading-[8px]">{label}</div>
      <div className="flex items-start"><Knob value={k} /><span className="-ml-[5px] mt-[7px] leading-[9px]">{value}</span></div>
    </div>
  );
}

function Simpler() {
  const modes: [string, React.ReactNode, string][] = [
    ["Classic", <path key="a" d="M3 6.500H2A2.500 2.500 0 012 1.500h4a2.500 2.500 0 010 5M4.500 5l2 1.500-2 1.500" />, "text-[#f19c27]"],
    ["1-Shot", <path key="b" d="M1 1v6M1 4h6M5 2l2 2-2 2" />, "text-[#b5b5b5] border-t border-[#444]"],
    ["Slice", <path key="c" d="M1 1h6v7H1zM3 1v7M5 1v7" />, "text-[#b5b5b5] border-t border-[#444]"],
  ];
  return (
    <Device
      title="VEH1 Ride - 17"
      width="w-[478px]"
      left={<><On /><RoundIcon label="Unfold"><PlayGlyph /></RoundIcon></>}
      right={<><Btn className="h-[10px] bg-[#5c5c5c] px-[4px]">Sample</Btn><Btn className="h-[10px] bg-[#5c5c5c] px-[2px]">Controls</Btn><Btn className="h-[10px] pl-[2px]">MPE</Btn><Hot /><Save /></>}
    >
      <div className="mx-[2px] mt-[2px] flex h-[85px] shrink-0 bg-[#191919]">
        <div className="flex w-[27px] flex-col border-r border-[#444]">
          {modes.map(([n, p, c]) => (
            <button key={n} className={`flex flex-1 flex-col items-center justify-center gap-[1px] ${c}`}>
              <svg viewBox="0 0 8 9" className="h-[8px] w-[8px]" fill="none" stroke="currentColor" strokeWidth="1">{p}</svg>
              <span className="leading-[9px]">{n}</span>
            </button>
          ))}
        </div>
        <div className="min-w-0 flex-1 pl-[4px]">
          <div className="flex h-[9px] w-[440px] text-[#8c8c8c]">
            {["1", "1.1.3", "1.2", "1.2.3", "1.3", "1.3.3", "1.4", "1.4.3"].map((l) => <span key={l} className="flex-1 pl-[3px] leading-[10px]">{l}</span>)}
          </div>
          <svg viewBox="0 0 440 54" className="h-[54px] w-[440px]">
            <rect width="440" height="54" fill="#161616" />
            {range(33).map((i) => <path key={i} d={`M${i * 13.750 + 0.5} 0v54`} stroke={i % 8 === 0 ? "#4a4a4a" : "#2e2e2e"} />)}
            <rect width="128" height="54" fill="#24666b" />
            {range(9).map((i) => <path key={i} d={`M${i * 13.750 + 13.500} 0v54`} stroke="#3a787c" />)}
            <path d={TAIL_WAVE} fill="#757575" />
            <path d={HEAD_WAVE} fill="#f19c27" />
            <path d="M.5 0v54M128 0v54" stroke="#b9b9b9" strokeWidth=".7" />
            <path d="M0 1l5 3-5 3zM128 1l-5 3 5 3z" fill="#ccc" />
          </svg>
          <div className="mt-[2px] flex leading-[9px]">
            <Param label="Gain" value="0.0 dB" w="w-[31px]" /><Param label="Start" value="0.00 %" w="w-[30px]" /><Param label="Loop" value="100 %" w="w-[30px]" />
            <Param label="Length" value="100 %" w="w-[30px]" /><Param label="Fade" value="0.00 %" w="w-[29px]" on={false} />
            <div className="flex w-[33px] flex-col gap-[2px] text-[6px]">
              <Btn className="h-[8px] w-[26px] bg-[#4cc5cf] text-[#0d3b40]">LOOP</Btn><Btn className="h-[8px] w-[26px] border border-[#4cc5cf] text-[#4cc5cf]">SNAP</Btn>
            </div>
            <Param label="Voices" value="6    ▾" w="w-[27px] whitespace-pre" />
            <div className="w-[44px] text-[#a8a8a8]">Retrig<Btn label="Retrig" className="ml-[6px] mt-px h-[7px] w-[7px] border-2 border-[#4cc5cf] bg-[#123]" /></div>
            <div className="w-[48px] text-[#a8a8a8]">Preserve<div className="text-[#f19c27]">Transients▾</div></div>
            <div className="w-[26px] text-[#a8a8a8]">Mode<div className="text-[#f19c27]">⇄ ▾</div></div>
            <div className="w-[25px] text-[#a8a8a8]">Env<div className="text-[#f19c27]">100</div></div>
            <div className="w-[41px]"><Btn className="h-[8px] w-[36px] bg-[#f19c27] text-[6px] text-[#3a2507]">WARP</Btn><div className="flex justify-between pr-[8px] pt-px text-[#f19c27]"><span>Beats</span><span>▾</span></div></div>
            <div className="w-[9px] text-[#a8a8a8]">as</div>
            <div className="flex flex-col gap-[2px] text-[#f19c27]">
              <Btn className="h-[8px] w-[35px] rounded-full border border-[#6a6a6a]">1 Beat</Btn>
              <div className="flex gap-[2px]"><Btn className="h-[8px] w-[17px] rounded-full border border-[#6a6a6a]">:2</Btn><Btn className="h-[8px] w-[16px] rounded-full border border-[#6a6a6a]">*2</Btn></div>
            </div>
          </div>
        </div>
      </div>
      <div className="flex flex-1 items-start px-[2px] pt-[2px] font-medium">
        <div className="flex w-[66px] flex-col gap-[2px]">
          <div className="flex items-center justify-between pr-[4px]">
            <label className="flex items-center gap-[5px]"><input type="checkbox" defaultChecked className="h-[8px] w-[8px] appearance-none bg-[#f19c27]" />Filter</label>
            <div className="relative"><Drop label="Filter type" value="" className="w-[27px]" /><svg viewBox="0 0 14 6" className="absolute left-[2px] top-[2px] h-[6px] w-[14px]"><path d="M0 1h9q3 0 3 5" fill="none" stroke="#ccc" /></svg></div>
          </div>
          <div className="flex gap-[2px]">
            <Btn className="h-[9px] w-[13px] bg-[#262626]">12</Btn><Btn className="h-[9px] w-[13px] bg-[#f19c27] text-[#3a2507]">24</Btn>
            <div className="ml-[3px]"><Drop label="Circuit" value="Clean" className="w-[28px]" text="pl-px" /></div>
          </div>
        </div>
        <SideKnob label="Frequency" value="22.0 kHz" k={0.84} />
        <div className="-ml-[2px] w-[71px]"><SideKnob label="Res" value="0.0 %" k={0} /></div>
        <div className="flex w-[103px] flex-col gap-[2px] border-l border-[#454545] pl-[11px]">
          <div className="flex items-center"><label className="flex w-[38px] items-center gap-[4px]"><input type="checkbox" defaultChecked className="h-[8px] w-[8px] appearance-none bg-[#f19c27]" />LFO</label><Btn className="h-[9px] w-[16px] bg-[#f19c27] text-[#3a2507]">Hz</Btn><Btn className="ml-[3px] h-[9px] w-[16px] bg-[#262626]">♪</Btn></div>
          <div className="flex">
            <div className="relative w-[38px]"><Drop label="LFO shape" value="" className="w-[29px]" /><svg viewBox="0 0 12 6" className="absolute left-[2px] top-[2px] h-[6px] w-[12px]"><path d="M0 5C3 5 2 1 4.500 1S7 5 9 5s2-3 3-4" fill="none" stroke="#ccc" /></svg></div>
            <Btn className="h-[9px] w-[35px] bg-gradient-to-r from-[#1f7d80] from-60% to-[#262626] to-60%">1.00 Hz</Btn>
          </div>
        </div>
        <SideKnob label="Attack" value="0.00 ms" k={0} /><SideKnob label="Decay" value="600 ms" k={0.42} /><SideKnob label="Sustain" value="0.0 dB" k={0.84} />
        <SideKnob label="Release" value="50.0 ms" k={0.2} /><div className="w-[36px]"><SideKnob label="Volume" value="-12.0 dB" k={0.18} /></div>
      </div>
    </Device>
  );
}

function StackKnob({ label, value, k, size = 18, color, centre }: { label: string; value: string; k: number; size?: number; color?: string; centre?: boolean }) {
  return (
    <div className="flex flex-col items-center whitespace-nowrap leading-[8px]">
      <span>{label}</span><Knob value={k} size={size} color={color} centre={centre} /><span className="-mt-[2px]">{value}</span>
    </div>
  );
}

const SHAPES = [
  "M0 1.500q3 0 4 1.500 1 1.500-4 1.500M4 3h4", "bell", "bell", "M8 .5q-4 0-4 2.500 0 2.500 4 2.500M0 3h4", "bell", "bell", "bell", "M0 1h7q3 0 3 5",
];

function EqEight() {
  const verticals = [
    [30, 40, 50, 60, 70, 80, 90], [200, 300, 400, 500, 600, 700, 800, 900], [2000, 3000, 4000, 5000, 6000, 7000, 8000, 9000], [20000],
  ].flat();
  const fx = (f: number) => 75 + 74 * Math.log10(f / 100);
  return (
    <Device
      title="EQ Eight"
      width="w-[320px]"
      left={<><RoundIcon label="Device on" className="border border-[#222] bg-[#444]" /><RoundIcon label="Unfold"><PlayGlyph /></RoundIcon></>}
      right={<><Hot /><Save /></>}
    >
      <div className="flex min-h-0 flex-1 font-medium">
        <div className="flex w-[33px] shrink-0 flex-col items-center justify-between pb-[4px] pt-px">
          <StackKnob label="Freq" value="18.0 kHz" k={0.95} color="#b5b5b5" />
          <StackKnob label="Gain" value="0.00 dB" k={0.5} centre />
          <StackKnob label="Q" value="0.71" k={0.33} color="#b5b5b5" />
        </div>
        <div className="flex min-w-0 flex-1 flex-col">
          <svg viewBox="0 0 251 89" className="h-[89px] w-full bg-[#181818]">
            {verticals.map((f) => <path key={f} d={`M${fx(f)} 0v89`} stroke="#2b2b2b" />)}
            {[100, 1000, 10000].map((f) => <path key={f} d={`M${fx(f)} 0v81`} stroke="#4e4e4e" />)}
            {[9, 27, 62, 80].map((y) => <path key={y} d={`M15 ${y}h236`} stroke="#303030" />)}
            <path d="M0 44.500h251" stroke="#444" />
            <path d="M0 44.500h230c12 0 16 6 19 44" fill="none" stroke="#9c9c9c" strokeWidth="1" />
            {["12", "6", "0", "-6", "-12"].map((t, i) => <text key={t} x="12" y={12 + i * 17.800} textAnchor="end" fontSize="7" fill="#9a9a9a">{t}</text>)}
            {["100", "1k", "10k"].map((t, i) => <text key={t} x={75 + i * 74} y="88" textAnchor="middle" fontSize="7" fill="#8c8c8c">{t}</text>)}
          </svg>
          <div className="mt-px flex flex-1">
            {SHAPES.map((s, i) => (
              <div key={i} className={`flex flex-1 flex-col items-center gap-[1px] border-r border-[#333] pt-[3px] ${i === 7 ? "bg-[#686868]" : ""}`}>
                <div className="relative">
                  <Drop label={`Band ${i + 1} type`} value="" className="w-[25px]" />
                  <svg viewBox="0 0 10 6" className="absolute left-[4px] top-[2px] h-[6px] w-[10px]" fill="none" stroke="#bbb" strokeWidth=".9">
                    {s === "bell" ? <><ellipse cx="5" cy="3" rx="2.800" ry="2.200" /><path d="M0 3h2.200M7.800 3H10" /></> : <path d={s} />}
                  </svg>
                </div>
                <label className="flex items-center gap-[5px] pr-[2px] leading-[9px]">
                  <input type="checkbox" defaultChecked={i < 4 || i === 7} className="h-[7px] w-[7px] appearance-none border border-[#222] bg-[#2f2f2f] checked:bg-[#aaa]" />{i + 1}
                </label>
              </div>
            ))}
          </div>
        </div>
        <div className="flex w-[36px] shrink-0 flex-col justify-between px-[3px] pb-[7px] pt-[4px] leading-[9px]">
          <div className="flex justify-between">
            <Btn label="Audition" className="h-[9px] w-[14px] bg-[#3a3a3a]"><svg viewBox="0 0 7 6" className="h-[6px] w-[7px]"><path d="M1 5.500V3a2.500 2.500 0 015 0v2.500" fill="none" stroke="#777" /></svg></Btn>
            <Btn label="Analyze" className="h-[9px] w-[14px] bg-[#a8a8a8]"><svg viewBox="0 0 8 6" className="h-[6px] w-[8px]"><path d="M1 3v3M3 1v5M5 2v4M7 1v5" stroke="#555" /></svg></Btn>
          </div>
          <span>Mode</span><Drop label="EQ mode" value="Stereo" text="pl-px" />
          <span>Edit</span><Btn className="h-[9px] border border-[#262626] bg-[#3d3d3d] text-[#888]">A</Btn>
          <span className="whitespace-nowrap">Adapt. Q</span><Btn className="h-[9px] bg-[#a8a8a8] text-[#444]">On</Btn>
          <span>Scale</span><Btn className="h-[9px] bg-[#262626]">100 %</Btn>
          <span>Gain</span><Btn className="h-[9px] bg-[#262626]">0.00 dB</Btn>
        </div>
      </div>
    </Device>
  );
}

function BitterSweet() {
  return (
    <Device
      title="BitterSweetV3"
      width="w-[99px]"
      left={<><On /><RoundIcon label="Fold"><DownGlyph /></RoundIcon><RoundIcon label="Edit plug-in"><Wrench size={6} strokeWidth={3} /></RoundIcon></>}
      right={<Hot />}
    >
      <div className="flex flex-1 flex-col px-[3px] font-medium">
        <div className="flex h-[15px] items-center gap-[2px]">
          <RoundIcon label="Open preset"><Folder size={5} strokeWidth={4} /></RoundIcon><Save />
          <span className="h-[9px] flex-1 border border-[#333] bg-[#4a4a4a] pl-px leading-[8px]">BitterSweet v3</span>
        </div>
        <div className="relative h-[84px] border border-[#444] bg-[#191919]"><span className="absolute bottom-0 left-0 h-[9px] w-[9px] rounded-full border-2 border-[#f19c27]" /></div>
        <div className="mt-[3px] flex gap-[2px]"><Drop label="X axis" value="none" className="flex-1" text="pl-px" /><Drop label="Y axis" value="none" className="flex-1" text="pl-px" /></div>
      </div>
    </Device>
  );
}

function Compressor() {
  return (
    <Device title="Compressor" width="w-[204px]" left={<><On /><RoundIcon label="Fold"><DownGlyph /></RoundIcon></>}>
      <div className="flex flex-1 font-medium">
        <div className="flex w-[35px] shrink-0 flex-col items-center justify-between pb-[3px] pt-[2px]">
          <StackKnob label="Ratio" value="3.00 : 1" k={0.68} />
          <StackKnob label="Attack" value="2.00 ms" k={0.47} />
          <StackKnob label="Release" value="50.0 ms" k={0.18} />
          <Btn className="h-[9px] w-[28px] bg-[#2b2b2b]">Auto</Btn>
        </div>
        <div className="mb-[3px] mt-[2px] flex min-w-0 flex-1 flex-col bg-[#191919] text-[#a8a8a8]">
          <div className="flex h-[96px] shrink-0">
            <div className="flex w-[35px] flex-col items-center pt-[1px] leading-[9px]">
              <span>Thresh</span>
              <div className="relative mt-px h-[73px] w-[9px] border border-[#4a4a4a]"><svg viewBox="0 0 5 5" className="absolute left-[11px] top-[28px] h-[4px] w-[4px]"><path d="M5 0v5L0 2.500z" fill="#777" /></svg></div>
              <span className="mt-px whitespace-nowrap">-10.5 dB</span>
            </div>
            <svg viewBox="0 0 86 73" className="mt-[11px] h-[73px] w-[86px] shrink-0">
              {range(8).map((i) => <path key={i} d={`M${i * 10.750 + 10.500} 0v73`} stroke="#3a3a3a" />)}
              {range(8).map((i) => <path key={i} d={`M0 ${i * 9.100 + 9.100}h86`} stroke="#3a3a3a" strokeWidth=".8" />)}
              <path d="M59 0v73M66 0v73" stroke="#444" />
              <rect x=".5" y=".5" width="85" height="72" fill="none" stroke="#555" />
              <path d="M0 65L52 22q4-4 10-6L86 10" fill="none" stroke="#35999c" strokeWidth="1.200" />
              <circle cx="56" cy="19" r="4.500" fill="#f19c27" />
            </svg>
            <div className="ml-[4px] flex w-[16px] shrink-0 flex-col items-center pt-[1px] leading-[9px]"><span>GR</span><div className="mt-px h-[73px] w-[7px] border border-[#4a4a4a]" /><span className="mt-px">0.0</span></div>
            <div className="ml-[8px] flex w-[16px] shrink-0 flex-col items-center pt-[1px] leading-[9px]"><span>Out</span><div className="mt-px h-[73px] w-[7px] border border-[#4a4a4a]" /><span className="mt-px">0.00</span></div>
          </div>
          <div className="flex flex-1 items-center whitespace-nowrap border-t border-[#444]">
            <span className="w-[14px] text-center">a</span>
            <svg viewBox="0 0 7 6" className="h-[6px] w-[13px]"><path d="M1 6V3q0-2 5-2" fill="none" stroke="#f19c27" /></svg>
            <span className="w-[13px] text-center">◆</span>
            <span className="ml-[4px]">Knee <b className="font-medium text-[#4cc5cf]">6.0 dB</b></span>
            <span className="ml-[5px]">Look. <b className="font-medium text-[#4cc5cf]">0 ms</b></span>
            <span className="ml-[4px] text-[#4cc5cf]">▾</span><span className="ml-[5px]">Env.</span>
            <Btn className="ml-[3px] h-[8px] w-[18px] bg-[#4cc5cf] text-[#0d3b40]">Log</Btn>
          </div>
        </div>
      </div>
    </Device>
  );
}

const Link = () => (
  <div className="flex w-[8px] shrink-0 items-center justify-center gap-px"><span className="h-[26px] w-[2px] bg-[#1e1e1e]" /><span className="h-[26px] w-[2px] bg-[#1e1e1e]" /></div>
);

function Detail() {
  return (
    <div className="flex px-[7px] pb-px pt-[8px] text-[7px] text-[#ececec]">
      <section className="h-[126px] w-[130px] shrink-0 border-2 border-[#2c2c2c] bg-[#5a5a5a] font-medium">
        <h2 className="bg-[#656565] pl-[2px] font-semibold leading-[11px]">Arrangement Position</h2>
        <p className="whitespace-pre pl-[2px] leading-[10px]">
          {"In playback, this displays the current\nArrangement position as\nbars-beats-sixteenths.\nDrag vertically or click and type in\nnumbers to set the Arrangement start\nposition. Type a comma or period to\nadvance to the next field. When Link is\nenabled, the position in relation to the\nglobal launch quantization will be shown\nin the background."}
        </p>
      </section>
      <div className="ml-[7px] flex min-w-0 flex-1 overflow-hidden bg-[#2e2e2e] font-medium">
        <div className="flex w-[11px] shrink-0 items-center justify-center"><span className="h-[26px] w-[3px] border-x border-dotted border-[#111]" /></div>
        <Simpler /><Link /><EqEight /><Link /><BitterSweet /><Link /><Compressor />
      </div>
    </div>
  );
}

function StatusBar() {
  return (
    <div className="flex h-[27px] items-center px-[6px] pt-px text-[7px] font-semibold text-white">
      <Btn label="Help view" className="h-[12px] w-[12px] rounded-full bg-[#2c2c2c]"><svg viewBox="0 0 8 8" className="h-[8px] w-[8px]"><path d="M0 8h8L4 0z" fill="#555" /></svg></Btn>
      <div className="ml-[6px] h-[13px] flex-1 border border-[#2a2a2a] bg-[#515151]" />
      <div className="ml-[6px] flex h-[13px] w-[136px] border border-[#2a2a2a] bg-[#515151]"><span className="relative h-full w-[56px] bg-[#6b6b6b]"><span className="absolute left-[26px] top-[1px] h-px w-[17px] bg-[#333]" /><span className="absolute bottom-[1px] left-[2px] h-px w-[23px] bg-[#333]" /></span></div>
      <span className="ml-[9px]">cym</span>
      <div className="ml-[3px] flex w-[119px] items-center gap-px">
        <div className="flex h-[13px] w-[93px] gap-[2px] border border-[#ddd] bg-[#444] p-px">
          <span className="relative w-[38px] bg-[#111]"><span className="absolute left-0 top-[2px] h-[4px] w-[11px] bg-[#f19c27]" /></span><span className="w-[24px] bg-[#111]" /><span className="w-[9px] bg-[#111]" /><span className="flex-1 bg-[#111]" />
        </div>
        <span className="h-[10px] w-[6px] border border-[#555] bg-[#222]" /><span className="ml-px h-[10px] w-[16px] border-2 border-[#666] bg-[#222]" />
      </div>
      <Btn label="Clip view" className="ml-[8px] h-[12px] w-[12px] rounded-full bg-[#2c2c2c]"><svg viewBox="0 0 8 8" className="h-[8px] w-[8px]"><path d="M0 8h8L4 0z" fill="#555" /></svg></Btn>
    </div>
  );
}

/* ---------- taskbar ---------- */

const G = ({ children }: { children: React.ReactNode }) => <svg viewBox="0 0 12 12" className="h-[12px] w-[12px]">{children}</svg>;
const LiveTile = () => <span className="flex h-[11px] w-[11px] items-center justify-center bg-[#5ff0e0] text-[5px] font-bold text-black">Live</span>;
const Fox = () => (
  <span className="relative flex h-[12px] w-[12px] items-center justify-center">
    <span className="absolute h-[7px] w-[7px] rounded-full bg-[#7a4be0]" /><FaFirefoxBrowser size={12} color="#ff7a2b" className="relative" />
  </span>
);

const APPS: [string, React.ReactNode, string?][] = [
  ["File Explorer", <G><path d="M0 1h5l1 1.500h6V11H0z" fill="#f3d77c" /><path d="M0 4h12v7H0z" fill="#fbe9a8" /><path d="M3 7h6v4H7.500V9h-3v2H3z" fill="#4aa3dd" /></G>, "run"],
  ["VMware", <G><path d="M1 4h7v7H1z" fill="none" stroke="#e8912b" strokeWidth="1.500" /><path d="M4 1h7v7H4z" fill="none" stroke="#3fa0dc" strokeWidth="1.500" /></G>],
  ["Visual Studio", <DiVisualstudio size={13} color="#9b5fd0" />],
  ["Audacity", <G><path d="M2 8V6a4 4 0 018 0v2" fill="none" stroke="#1c2cae" strokeWidth="2" /><path d="M3 6h6v4H3z" fill="#e87a1d" /><path d="M3 8h6" stroke="#d22" /></G>],
  ["Ableton Live", <LiveTile />],
  ["FL Studio", <G><circle cx="6" cy="6" r="5" fill="#3a2a1a" /><path d="M6 2c3 1 3 6 0 9-3-2-3-7 0-9z" fill="#f0932b" /><path d="M6 2c2 0 3 5 0 9z" fill="#3faa4a" /></G>],
  ["Cubase", <G><rect x="1" y="1" width="10" height="10" fill="#dfe4ea" /><ellipse cx="6" cy="6" rx="4" ry="2.500" fill="none" stroke="#555" /><circle cx="6" cy="6" r="1.300" fill="#555" /></G>],
  ["Audio editor", <G><rect x="1.500" y="1" width="9" height="10" fill="#e8eefc" /><path d="M3.500 3h5M3.500 5h3M3.500 8h6" stroke="#2854b8" strokeWidth="1.500" /></G>],
  ["Premiere Pro", <span className="flex h-[11px] w-[11px] items-center justify-center border border-[#a06be0] bg-[#2a0845] text-[6px] text-[#d9a6ff]">Pr</span>],
  ["Streamlabs", <G><rect x=".5" y=".5" width="11" height="11" rx="2" fill="#7ff5cb" /><path d="M3 5h5a2 2 0 012 2v2H5a2 2 0 01-2-2z" fill="#0c2b2b" /></G>],
  ["OBS", <G><circle cx="6" cy="6" r="5" fill="#2b2b2b" stroke="#ccc" /><path d="M6 2a2 2 0 012 3.500M9 8a2 2 0 01-4 .5M3 7a2 2 0 012-3" fill="none" stroke="#ddd" /></G>, "run"],
  ["Minecraft", <G><path d="M6 1l5 2.500L6 6 1 3.500z" fill="#6fcf3e" /><path d="M1 3.500L6 6v5L1 8.500z" fill="#7a5230" /><path d="M11 3.500L6 6v5l5-2.500z" fill="#54381f" /></G>],
  ["Game", <G><rect x="1" y="1" width="10" height="10" fill="#d9c0a8" /><path d="M2 2h3v3H2zM7 3h3v2H7zM3 8h6v2H3z" fill="#6a3d3d" /></G>],
  ["osu!", <G><circle cx="6" cy="6" r="5" fill="#ef6bb0" /><path d="M2.500 6h7" stroke="#fff" strokeWidth="2" strokeDasharray="2 .6" /></G>],
  ["TeamViewer", <G><rect x=".5" y=".5" width="11" height="11" rx="1" fill="#1b73d0" /><circle cx="6" cy="6" r="4.300" fill="#fff" /><path d="M2.500 6l2-1.500v1h3v-1l2 1.500-2 1.500v-1h-3v1z" fill="#1b73d0" /></G>],
  ["Firefox", <Fox />],
  ["Edge", <FaEdge size={12} color="#2fa4d8" />],
  ["Chrome", <G><circle cx="6" cy="6" r="5.300" fill="#e2453a" /><path d="M1.200 3.500A5.300 5.300 0 006 11.300L8.300 7.300z" fill="#36a852" /><path d="M6 11.300A5.300 5.300 0 0011 4H6l2.300 3.300z" fill="#fbc116" /><circle cx="6" cy="6" r="2.300" fill="#4387f4" stroke="#fff" strokeWidth=".7" /></G>],
  ["Firefox window", <Fox />, "run"],
  ["Discord", <span className="flex h-[11px] w-[11px] items-center justify-center rounded-full bg-[#5865f2]"><FaDiscord size={7} color="#fff" /></span>, "run"],
  ["Notepad", <G><path d="M3 1h8L9 11H1z" fill="#a8d5d9" /><path d="M3 1h8l-.4 2H2.600z" fill="#e8f4f5" /></G>, "run"],
  ["Ableton Live window", <LiveTile />, "active"],
];

function Taskbar() {
  return (
    <footer className="flex h-[20px] items-stretch bg-[#02123d] text-[8px] text-white [font-family:Lato,sans-serif]">
      <button aria-label="Start" className="ml-[2px] flex w-[27px] items-center">
        <svg viewBox="0 0 20 20" className="h-[20px] w-[20px]"><circle cx="10" cy="10" r="10" fill="#c8617a" /><ellipse cx="11" cy="13" rx="6" ry="6" fill="#f6dcd6" /><path d="M2 11C3 3 15 1 18 9c-4-2-6 0-8-1-2 2-3 4-4 8-3-1-4-3-4-5z" fill="#d67c90" /><circle cx="9" cy="13" r="1" fill="#6a3040" /><circle cx="14" cy="13" r="1" fill="#6a3040" /></svg>
      </button>
      <div className="flex w-[542px] shrink-0">
        {APPS.map(([name, icon, state]) => (
          <button key={name} aria-label={name} className={`flex flex-1 items-center justify-center border-b-2 pt-[2px] ${state === "active" ? "bg-[#1d4378]" : ""} ${state ? "border-[#8fb4ee]" : "border-transparent"}`}>{icon}</button>
        ))}
      </div>
      <div className="flex flex-1 items-center justify-end gap-[5px] pr-[16px]">
        <ChevronUp size={10} />
        <G><circle cx="6" cy="6" r="5" fill="#111" stroke="#bbb" /><circle cx="6" cy="6" r="2.500" fill="#e03030" /></G>
        <FaMicrophone size={10} className="mx-[1px]" />
        <G><circle cx="5.500" cy="6" r="5" fill="#e5e5e5" /><path d="M3 3l3 5 2-5" stroke="#555" fill="none" /><rect x="6" y="6" width="5" height="5" fill="#b58a5a" /></G>
        <G><path d="M1 1h10v6q-2 4-5 5-3-1-5-5z" fill="#fff" /><path d="M3 6l2 2 4-4" stroke="#2a9a3a" strokeWidth="1.800" fill="none" /></G>
        <FaDiscord size={10} /><FaSteamSymbol size={11} color="#bcd6ee" />
        <G><circle cx="6" cy="6" r="3.800" fill="none" stroke="#3aa0ee" strokeWidth="3" /><path d="M6 2.200A3.800 3.800 0 019.800 6" fill="none" stroke="#f2c230" strokeWidth="3" /><path d="M9.800 6A3.800 3.800 0 016 9.800" fill="none" stroke="#e33f50" strokeWidth="3" /><path d="M2.200 6A3.800 3.800 0 006 9.800" fill="none" stroke="#39b54a" strokeWidth="3" /></G>
        <Wifi size={10} /><Volume2 size={11} />
        <span className="ml-[2px]">ENG</span><span className="mx-[4px]">03:14:04 PM</span>
        <MessageSquareText size={12} fill="#fff" stroke="#02123d" />
      </div>
    </footer>
  );
}

export default function App() {
  return (
    <div className="flex min-h-screen w-full flex-col overflow-hidden bg-[#3b3b3b] [font-family:Inter,sans-serif]">
      <TitleBar />
      <MenuBar />
      <Toolbar />
      <main className="flex pl-[8px] pr-[6px]">
        <Browser />
        <Arrangement />
      </main>
      <Detail />
      <StatusBar />
      <Taskbar />
    </div>
  );
}
